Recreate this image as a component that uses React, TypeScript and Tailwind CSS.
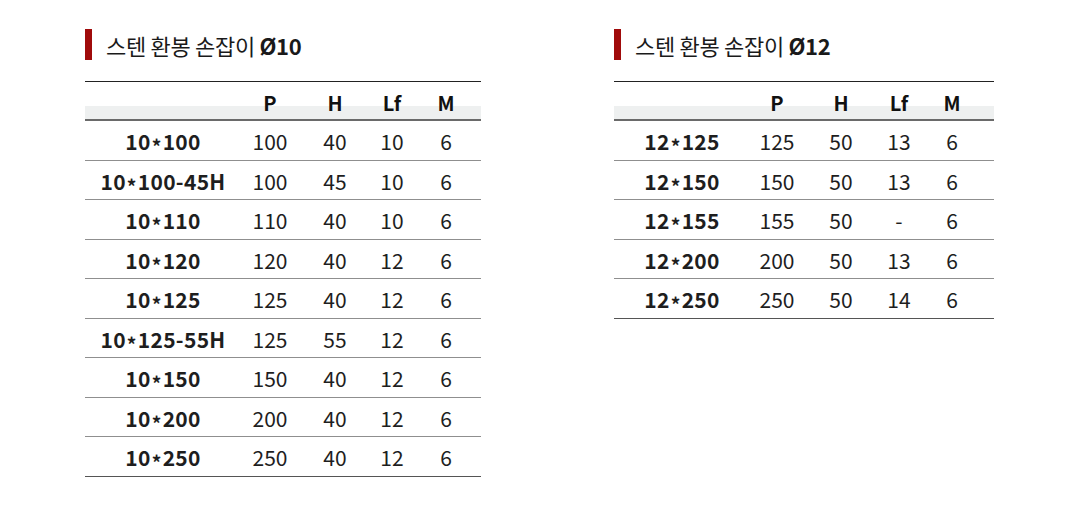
const left = {
  title: "Ø10",
  cols: "grid-cols-[156px_58px_72px_42px_66px_1fr]",
  width: "w-[396px]",
  rows: [
    ["10*100", "100", "40", "10", "6"],
    ["10*100-45H", "100", "45", "10", "6"],
    ["10*110", "110", "40", "10", "6"],
    ["10*120", "120", "40", "12", "6"],
    ["10*125", "125", "40", "12", "6"],
    ["10*125-55H", "125", "55", "12", "6"],
    ["10*150", "150", "40", "12", "6"],
    ["10*200", "200", "40", "12", "6"],
    ["10*250", "250", "40", "12", "6"],
  ],
};

const right = {
  title: "Ø12",
  cols: "grid-cols-[136px_54px_74px_42px_64px_1fr]",
  width: "w-[380px]",
  rows: [
    ["12*125", "125", "50", "13", "6"],
    ["12*150", "150", "50", "13", "6"],
    ["12*155", "155", "50", "-", "6"],
    ["12*200", "200", "50", "13", "6"],
    ["12*250", "250", "50", "14", "6"],
  ],
};

type Spec = typeof left;

// the asterisk sits mid-height in the original font
const Model = ({ name }: { name: string }) => {
  const [a, b] = name.split("*");
  return (
    <span className="text-center font-bold tracking-[0.3px]">
      {a}
      <span className="inline-block translate-y-[4px] mx-[1px] text-[19px]">*</span>
      {b}
    </span>
  );
};

const SpecTable = ({ spec }: { spec: Spec }) => {
  return (
    <div className={spec.width}>
      <div className="flex items-center h-[31px]">
        <div className="w-[7px] h-[31px] bg-[#a00b0b]" />
        <h2 className="ml-[14px] text-[22px] leading-none text-[#1a1a1a] tracking-[-0.3px]">
          스텐 환봉 손잡이 <span className="font-bold">{spec.title}</span>
        </h2>
      </div>

      <div className="mt-[21px] border-t border-[#222]">
        <div
          className={`grid ${spec.cols} h-[39px] items-center border-b-2 border-[#6a6a6a] bg-[linear-gradient(to_bottom,#ffffff_24px,#eef0f0_24px)] font-bold text-[20px] text-[#111] pt-[5px]`}
        >
          <span />
          <span className="text-center">P</span>
          <span className="text-center">H</span>
          <span className="text-center">Lf</span>
          <span className="text-center">M</span>
        </div>

        {spec.rows.map((r, i) => (
          <div
            key={r[0]}
            className={`grid ${spec.cols} h-[39.5px] items-center text-[21px] text-[#1e1e1e] pt-[3px] border-b ${
              i === spec.rows.length - 1 ? "border-[#555]" : "border-[#8f8f8f]"
            }`}
          >
            <Model name={r[0]} />
            <span className="text-center">{r[1]}</span>
            <span className="text-center">{r[2]}</span>
            <span className="text-center">{r[3]}</span>
            <span className="text-center">{r[4]}</span>
          </div>
        ))}
      </div>
    </div>
  );
};

export default function App() {
  return (
    <div
      className="w-[1091px] h-[516px] bg-white flex items-start gap-[133px] pl-[85px] pt-[29px]"
      style={{ fontFamily: '"Noto Sans CJK KR", "Noto Sans", sans-serif' }}
    >
      <SpecTable spec={left} />
      <SpecTable spec={right} />
    </div>
  );
}
